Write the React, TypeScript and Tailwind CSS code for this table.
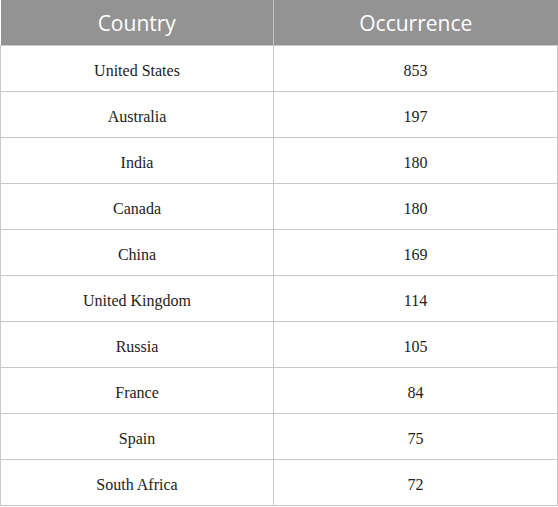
const rows: [string, number][] = [
  ["United States", 853],
  ["Australia", 197],
  ["India", 180],
  ["Canada", 180],
  ["China", 169],
  ["United Kingdom", 114],
  ["Russia", 105],
  ["France", 84],
  ["Spain", 75],
  ["South Africa", 72],
];

export default function App() {
  return (
    <div className="w-[558px] bg-white">
      <table className="w-full border-collapse table-fixed">
        <thead>
          <tr className="bg-[#939393] text-white font-['Open_Sans',sans-serif] text-[21px]">
            <th className="w-[273px] h-[45px] pt-[2px] font-normal border-r border-[#c4c4c4]">Country</th>
            <th className="h-[45px] pt-[2px] font-normal">Occurrence</th>
          </tr>
        </thead>
        <tbody className="font-['Liberation_Serif',serif] text-[16px] text-[#222]">
          {rows.map(([country, n]) => (
            <tr key={country} className="h-[46px]">
              <td className="text-center pt-[6px] border border-[#c8c8c8]">{country}</td>
              <td className="text-center pt-[6px] border border-[#c8c8c8]">{n}</td>
            </tr>
          ))}
        </tbody>
      </table>
    </div>
  );
}
